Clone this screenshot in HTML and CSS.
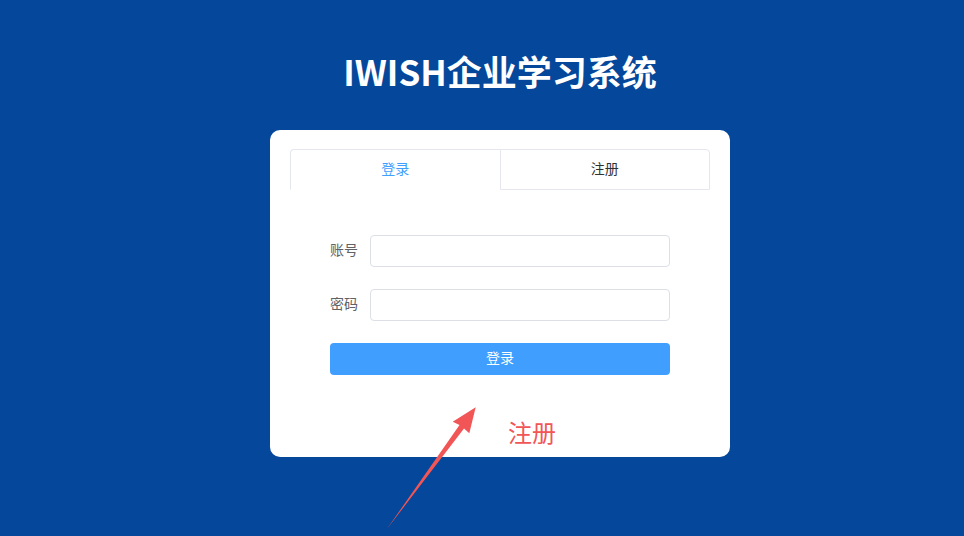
FILE: index.html
```html
<!DOCTYPE html>
<html lang="zh-CN">
<head>
<meta charset="utf-8">
<title>IWISH企业学习系统</title>
<link rel="stylesheet" href="styles.css">
</head>
<body>
<div class="page">
  <h1 class="title">IWISH企业学习系统</h1>
  <div class="card">
    <div class="tabs">
      <div class="tab active">登录</div>
      <div class="tab">注册</div>
    </div>
    <form class="form">
      <div class="row">
        <label class="label">账号</label>
        <input class="input" type="text">
      </div>
      <div class="row">
        <label class="label">密码</label>
        <input class="input" type="password">
      </div>
      <button type="button" class="btn">登录</button>
    </form>
    <div class="note">注册</div>
  </div>
  <svg class="arrow" width="964" height="536" viewBox="0 0 964 536">
    <path d="M386.7 529.3 L459.5 425 L452.7 421.7 L475.7 407.3 L469.3 433.3 L464 428.6 Z" fill="#f25555"/>
  </svg>
</div>
</body>
</html>
```
FILE: styles.css
```css
html, body {
  margin: 0;
  padding: 0;
}
body {
  background: #05479a;
  font-family: "Noto Sans CJK SC", "Noto Sans", sans-serif;
  width: 964px;
  height: 536px;
  overflow: hidden;
}
.page {
  position: relative;
  width: 1000px;
  height: 536px;
  display: flex;
  flex-direction: column;
  align-items: center;
}
.title {
  margin: 47px 0 0;
  font-size: 35px;
  line-height: 48px;
  font-weight: 700;
  color: #ffffff;
  height: 83px;
}
.card {
  width: 420px;
  background: #ffffff;
  border-radius: 10px;
  padding: 19px 20px 5px;
}
.tabs {
  display: flex;
  height: 41px;
}
.tab {
  flex: 1;
  box-sizing: border-box;
  border: 1px solid #e4e7ed;
  text-align: center;
  font-size: 14px;
  line-height: 37px;
  color: #303133;
}
.tab.active {
  color: #409eff;
  border-bottom-color: transparent;
  border-right: none;
  border-top-left-radius: 4px;
}
.tab:last-child {
  border-top-right-radius: 4px;
}
.form {
  width: 340px;
  margin: 45px auto 0;
}
.row {
  display: flex;
  align-items: center;
  margin-bottom: 22px;
}
.label {
  width: 40px;
  box-sizing: border-box;
  padding: 0 12px 3px 0;
  text-align: right;
  font-size: 14px;
  line-height: 29px;
  color: #606266;
  white-space: nowrap;
}
.input {
  width: 300px;
  height: 32px;
  box-sizing: border-box;
  border: 1px solid #dcdfe6;
  border-radius: 4px;
  padding: 0 12px;
  outline: none;
  background: #fff;
}
.btn {
  display: block;
  width: 340px;
  height: 32px;
  border: none;
  border-radius: 4px;
  background: #409eff;
  color: #ffffff;
  font-family: inherit;
  font-size: 14px;
  line-height: 28px;
  padding: 0 0 4px;
}
.note {
  margin-top: 40px;
  padding-left: 218px;
  font-size: 24px;
  line-height: 34px;
  height: 37px;
  color: #f25555;
}
.arrow {
  position: absolute;
  left: 0;
  top: 0;
  pointer-events: none;
}
```
